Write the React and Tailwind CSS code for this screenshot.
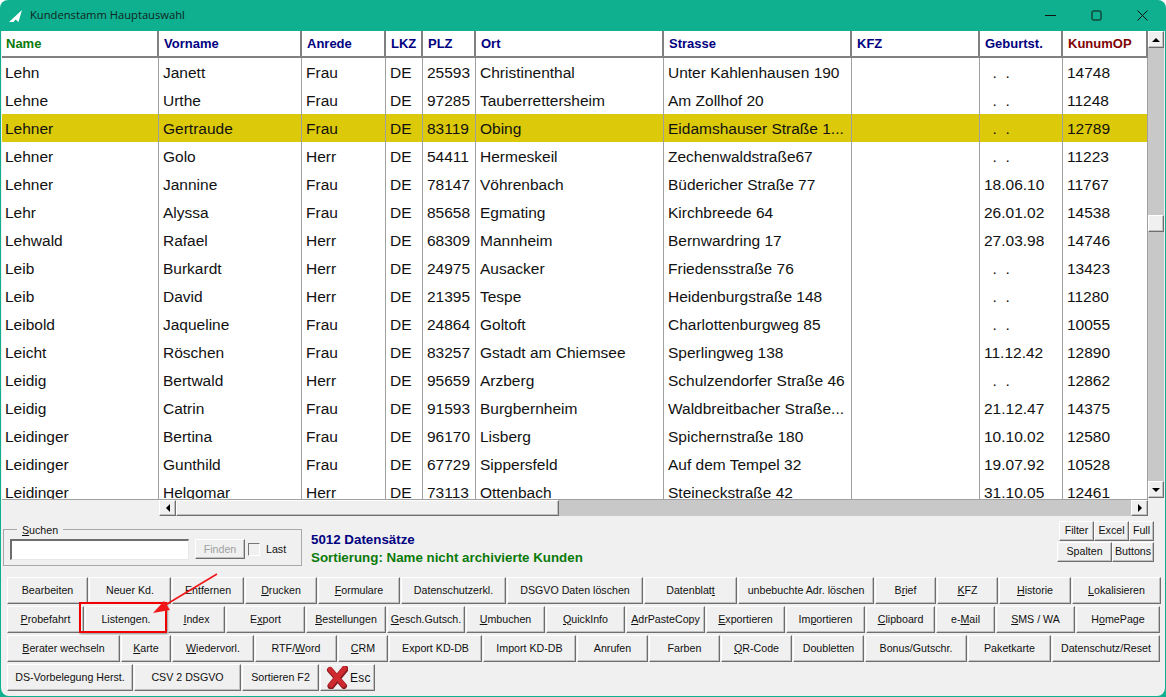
import React from 'react'

const columns = [
    { label: 'Name', color: 'text-[#0a7a0a]', width: 'w-[157px]' },
    { label: 'Vorname', color: 'text-[#000080]', width: 'w-[143px]' },
    { label: 'Anrede', color: 'text-[#000080]', width: 'w-[84px]' },
    { label: 'LKZ', color: 'text-[#000080]', width: 'w-[37px]' },
    { label: 'PLZ', color: 'text-[#000080]', width: 'w-[53px]' },
    { label: 'Ort', color: 'text-[#000080]', width: 'w-[188px]' },
    { label: 'Strasse', color: 'text-[#000080]', width: 'w-[188px]' },
    { label: 'KFZ', color: 'text-[#000080]', width: 'w-[128px]' },
    { label: 'Geburtst.', color: 'text-[#000080]', width: 'w-[83px]' },
    { label: 'KunumOP', color: 'text-[#800000]', width: 'w-[85px]' },
]

const rows = [
    ['Lehn', 'Janett', 'Frau', 'DE', '25593', 'Christinenthal', 'Unter Kahlenhausen 190', '', '  .  .', '14748'],
    ['Lehne', 'Urthe', 'Frau', 'DE', '97285', 'Tauberrettersheim', 'Am Zollhof 20', '', '  .  .', '11248'],
    ['Lehner', 'Gertraude', 'Frau', 'DE', '83119', 'Obing', 'Eidamshauser Straße 1...', '', '  .  .', '12789'],
    ['Lehner', 'Golo', 'Herr', 'DE', '54411', 'Hermeskeil', 'Zechenwaldstraße67', '', '  .  .', '11223'],
    ['Lehner', 'Jannine', 'Frau', 'DE', '78147', 'Vöhrenbach', 'Büdericher Straße 77', '', '18.06.10', '11767'],
    ['Lehr', 'Alyssa', 'Frau', 'DE', '85658', 'Egmating', 'Kirchbreede 64', '', '26.01.02', '14538'],
    ['Lehwald', 'Rafael', 'Herr', 'DE', '68309', 'Mannheim', 'Bernwardring 17', '', '27.03.98', '14746'],
    ['Leib', 'Burkardt', 'Herr', 'DE', '24975', 'Ausacker', 'Friedensstraße 76', '', '  .  .', '13423'],
    ['Leib', 'David', 'Herr', 'DE', '21395', 'Tespe', 'Heidenburgstraße 148', '', '  .  .', '11280'],
    ['Leibold', 'Jaqueline', 'Frau', 'DE', '24864', 'Goltoft', 'Charlottenburgweg 85', '', '  .  .', '10055'],
    ['Leicht', 'Röschen', 'Frau', 'DE', '83257', 'Gstadt am Chiemsee', 'Sperlingweg 138', '', '11.12.42', '12890'],
    ['Leidig', 'Bertwald', 'Herr', 'DE', '95659', 'Arzberg', 'Schulzendorfer Straße 46', '', '  .  .', '12862'],
    ['Leidig', 'Catrin', 'Frau', 'DE', '91593', 'Burgbernheim', 'Waldbreitbacher Straße...', '', '21.12.47', '14375'],
    ['Leidinger', 'Bertina', 'Frau', 'DE', '96170', 'Lisberg', 'Spichernstraße 180', '', '10.10.02', '12580'],
    ['Leidinger', 'Gunthild', 'Frau', 'DE', '67729', 'Sippersfeld', 'Auf dem Tempel 32', '', '19.07.92', '10528'],
    ['Leidinger', 'Helgomar', 'Herr', 'DE', '73113', 'Ottenbach', 'Steineckstraße 42', '', '31.10.05', '12461'],
]

// & marks the underlined mnemonic letter
const buttonRows = [
    [
        ['Bearbeiten', 'w-[81px]'], ['Neuer Kd.', 'w-[82px]'], ['Entfernen', 'w-[72px]'], ['&Drucken', 'w-[72px]'],
        ['&Formulare', 'w-[82px]'], ['Datenschutzerkl.', 'w-[105px]'], ['DSGVO Daten löschen', 'w-[136px]'], ['Datenblat&t', 'w-[93px]'],
        ['unbebuchte Adr. löschen', 'w-[136px]'], ['B&rief', 'w-[61px]'], ['&KFZ', 'w-[61px]'], ['&Historie', 'w-[72px]'], ['&Lokalisieren', 'w-[89px]'],
    ],
    [
        ['&Probefahrt', 'w-[77px]'], ['Listen&gen.', 'w-[82px]'], ['&Index', 'w-[57px]'], ['E&xport', 'w-[79px]'],
        ['&Bestellungen', 'w-[80px]'], ['&Gesch.Gutsch.', 'w-[78px]'], ['&Umbuchen', 'w-[79px]'], ['&QuickInfo', 'w-[79px]'],
        ['&AdrPasteCopy', 'w-[79px]'], ['&Exportieren', 'w-[79px]'], ['Im&portieren', 'w-[79px]'], ['&Clipboard', 'w-[69px]'],
        ['e-&Mail', 'w-[59px]'], ['&SMS / WA', 'w-[79px]'], ['H&omePage', 'w-[84px]'],
    ],
    [
        ['&Berater wechseln', 'w-[113px]'], ['&Karte', 'w-[50px]'], ['&Wiedervorl.', 'w-[82px]'], ['RTF/&Word', 'w-[82px]'],
        ['&CRM', 'w-[50px]'], ['Export KD-DB', 'w-[93px]'], ['Import KD-DB', 'w-[93px]'], ['Anrufen', 'w-[71px]'],
        ['Farben', 'w-[71px]'], ['&QR-Code', 'w-[71px]'], ['Doubletten', 'w-[71px]'], ['Bonus/Gutschr.', 'w-[102px]'],
        ['Paketkarte', 'w-[83px]'], ['Datenschutz/Reset', 'w-[108px]'],
    ],
    [
        ['DS-Vorbelegung Herst.', 'w-[126px]'], ['CSV 2 DSGVO', 'w-[107px]'], ['Sortieren F2', 'w-[77px]'],
    ],
]

const raised = 'border border-t-white border-l-white border-r-[#6e6e6e] border-b-[#6e6e6e] bg-[#f0f0f0] shadow-[inset_-1px_-1px_0_#c0c0c0]'

const Mnemonic = ({ text }) => {
    const i = text.indexOf('&')
    if (i < 0) return text
    return (
        <>
            {text.slice(0, i)}
            <u>{text[i + 1]}</u>
            {text.slice(i + 2)}
        </>
    )
}

const WinButton = ({ label, width, extra = 'h-[27px]' }) => (
    <button className={`${width} ${extra} ${raised} shrink-0 pb-[2px] text-center text-[10.67px] text-[#111] whitespace-nowrap overflow-hidden`}>
        <Mnemonic text={label} />
    </button>
)

const ArrowBox = ({ dir, className = '' }) => (
    <div className={`${raised} flex items-center justify-center shrink-0 ${className}`}>
        <svg width="8" height="8" viewBox="0 0 8 8">
            {dir === 'up' && <path d="M0 6 L4 2 L8 6 Z" fill="#000" />}
            {dir === 'down' && <path d="M0 2 L4 6 L8 2 Z" fill="#000" />}
            {dir === 'left' && <path d="M6 0 L2 4 L6 8 Z" fill="#000" />}
            {dir === 'right' && <path d="M2 0 L6 4 L2 8 Z" fill="#000" />}
        </svg>
    </div>
)

const EscIcon = () => (
    <svg width="22" height="23" viewBox="0 0 22 23" className="shrink-0">
        <path d="M4 4 L18 20" stroke="#8a1a1f" strokeWidth="6" strokeLinecap="round" />
        <path d="M19 3 L5 20" stroke="#8a1a1f" strokeWidth="7" strokeLinecap="round" />
        <path d="M4 3.5 L17.5 19" stroke="#cf2a30" strokeWidth="4.5" strokeLinecap="round" />
        <path d="M18.5 2.5 L5 19" stroke="#cf2a30" strokeWidth="5" strokeLinecap="round" />
    </svg>
)

const App = () => {
    return (
        <div className="relative w-[1166px] h-[697px] overflow-hidden rounded-t-lg bg-[#0fb08f] font-['Liberation_Sans',Arial,sans-serif]">
            <div className="h-[31px] flex items-center">
                <svg width="14" height="15" viewBox="0 0 14 15" className="ml-[8px]">
                    <path d="M1 14 L14 2 L10.5 14 L7.5 11.5 L5.5 14 Z" fill="#fff" />
                </svg>
                <span className="ml-[8px] text-[11.2px] text-[#10241f] font-['Open_Sans',sans-serif]">Kundenstamm Hauptauswahl</span>
                <div className="ml-auto flex items-center gap-[35px] mr-[18px]">
                    <svg width="11" height="11" viewBox="0 0 11 11"><path d="M0 5.5 H11" stroke="#111" strokeWidth="1" /></svg>
                    <svg width="11" height="11" viewBox="0 0 11 11"><rect x="1" y="1" width="9" height="9" rx="1.2" fill="none" stroke="#111" strokeWidth="1" /></svg>
                    <svg width="11" height="11" viewBox="0 0 11 11"><path d="M0.5 0.5 L10.5 10.5 M10.5 0.5 L0.5 10.5" stroke="#111" strokeWidth="1" /></svg>
                </div>
            </div>

            <div className="mx-[1px] mb-[1px] h-[665px] bg-[#f0f0f0] rounded-b-lg flex flex-col overflow-hidden">
                <div className="flex h-[485px] shrink-0 ml-px">
                    <div className="w-[1146px] flex flex-col">
                        <div className="flex flex-col h-[468px] overflow-hidden bg-white">
                            <div className="flex h-[27px] shrink-0 border-b-2 border-[#808080]">
                                {columns.map((c, i) => (
                                    <div key={c.label} className={`${c.width} ${i === 0 ? 'pl-[4px]' : 'pl-[5px]'} shrink-0 border-r-2 border-[#808080] flex items-center text-[13px] font-bold ${c.color}`}>
                                        {c.label}
                                    </div>
                                ))}
                            </div>
                            {rows.map((row, r) => (
                                <div key={r} className="flex h-[28px] shrink-0">
                                    {row.map((cell, i) => (
                                        <div key={i} className={`${columns[i].width} ${i === 0 ? 'pl-[3px]' : 'pl-[4px]'} shrink-0 border-r border-[#a0a0a0] pt-[2px] flex items-center text-[15.5px] text-[#111] whitespace-pre ${r === 2 ? 'bg-[#dcc90a]' : ''}`}>
                                            {cell}
                                        </div>
                                    ))}
                                </div>
                            ))}
                        </div>
                        <div className="flex h-[17px] bg-[#f0f0f0] border-t border-[#a0a0a0]">
                            <div className="w-[157px] shrink-0" />
                            <ArrowBox dir="left" className="w-[17px]" />
                            <div className={`${raised} w-[383px] shrink-0`} />
                            <div className="flex-1 bg-[#c8c8c8]" />
                            <ArrowBox dir="right" className="w-[17px]" />
                        </div>
                    </div>
                    <div className="w-[16px] h-[467px] flex flex-col bg-[#c8c8c8]">
                        <ArrowBox dir="up" className="h-[17px]" />
                        <div className="h-[167px]" />
                        <div className={`${raised} h-[17px]`} />
                        <div className="flex-1" />
                        <ArrowBox dir="down" className="h-[17px]" />
                    </div>
                </div>

                <div className="flex h-[60px] shrink-0 pt-[13px]">
                    <fieldset className="ml-[2px] w-[299px] h-[37px] border border-[#a8a8a8] relative flex items-center">
                        <span className="absolute -top-[8px] left-[13px] bg-[#f0f0f0] px-[5px] text-[10.67px] text-[#111]"><u>S</u>uchen</span>
                        <div className="ml-[6px] mt-[3px] w-[179px] h-[21px] bg-white border border-t-2 border-l-2 border-t-[#6e6e6e] border-l-[#6e6e6e] border-r-[#e8e8e8] border-b-[#e8e8e8]" />
                        <button className={`ml-[6px] mt-[3px] w-[50px] h-[20px] ${raised} text-[10.67px] text-[#a0a0a0]`}>Finden</button>
                        <div className="ml-[3px] mt-[3px] w-[12px] h-[13px] bg-[#f0f0f0] border border-[#777] border-b-white border-r-white" />
                        <span className="ml-[6px] mt-[3px] text-[10.67px] text-[#111]">Last</span>
                    </fieldset>
                    <div className="ml-[9px] pt-[2px] text-[13.33px] font-bold leading-[18px]">
                        <div className="text-[#000080]">5012 Datensätze</div>
                        <div className="text-[#0a7a0a]">Sortierung: Name nicht archivierte Kunden</div>
                    </div>
                    <div className="ml-auto mr-[11px] -mt-[8px] flex flex-col items-end gap-[1px]">
                        <div className="flex">
                            <WinButton label="Filter" width="w-[35px]" extra="h-[20px]" />
                            <WinButton label="Excel" width="w-[35px]" extra="h-[20px]" />
                            <WinButton label="Full" width="w-[25px]" extra="h-[20px]" />
                        </div>
                        <div className="flex">
                            <WinButton label="Spalten" width="w-[55px]" extra="h-[20px]" />
                            <WinButton label="Buttons" width="w-[42px]" extra="h-[20px]" />
                        </div>
                    </div>
                </div>

                <div className="pl-[6px] pt-[1px] flex flex-col gap-[2px]">
                    {buttonRows.map((buttons, r) => (
                        <div key={r} className="flex gap-px">
                            {buttons.map(([label, width]) => (
                                <WinButton key={label} label={label} width={width} />
                            ))}
                            {r === 3 && (
                                <button className={`w-[55px] h-[27px] ${raised} flex items-center gap-[2px] pl-[5px] text-[12px] text-[#111] tracking-[0.3px]`}>
                                    <EscIcon />
                                    Esc
                                </button>
                            )}
                        </div>
                    ))}
                </div>
            </div>

            <div className="absolute left-[79px] top-[602px] w-[88px] h-[31px] border-[2px] border-[#f00000] shadow-[1px_1px_2px_rgba(0,0,0,0.4)]" />
            <svg className="absolute left-[150px] top-[570px]" width="75" height="50" viewBox="0 0 75 50">
                <path d="M67 4 L12 37" stroke="#f01818" strokeWidth="1.6" />
                <path d="M3 43 L14 31 L20 40 Z" fill="#f01818" />
            </svg>
        </div>
    )
}

export default App
